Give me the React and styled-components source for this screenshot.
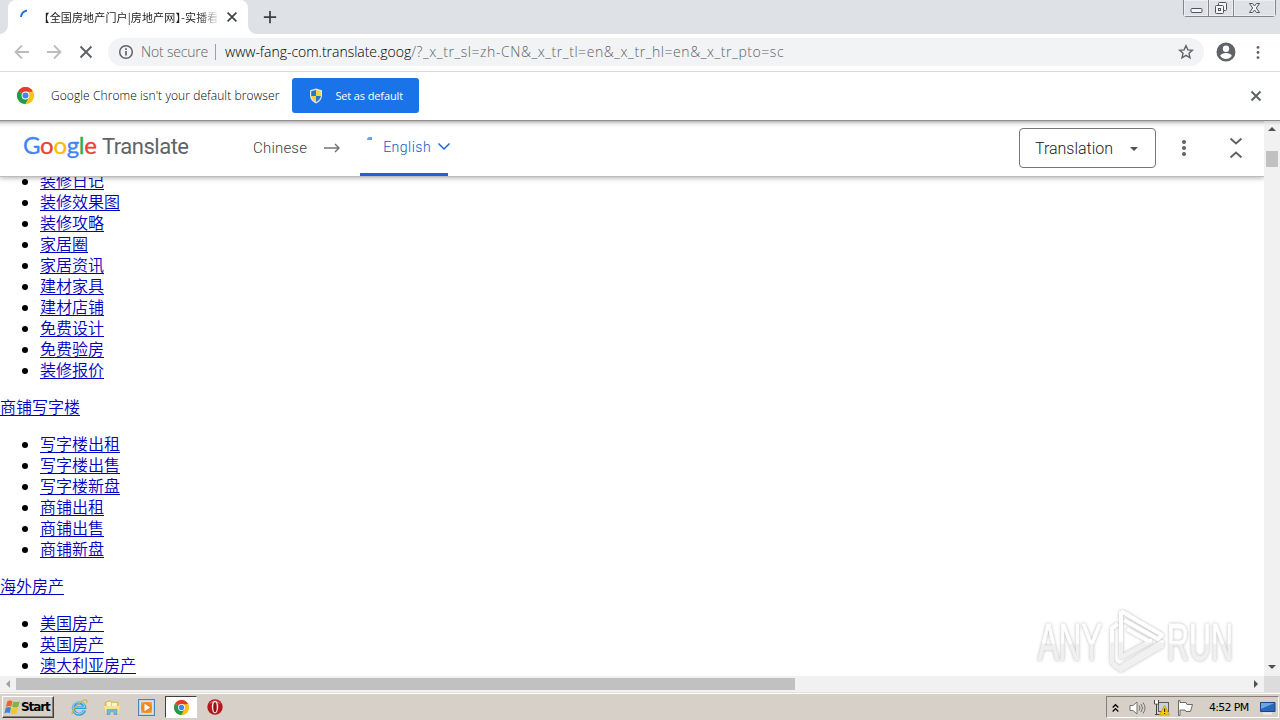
import React from 'react';
import styled, { createGlobalStyle } from 'styled-components';

const GlobalStyle = createGlobalStyle`
  * {
    box-sizing: border-box;
  }

  body {
    margin: 0;
    overflow: hidden;
    background: #fff;
  }

  svg {
    display: block;
    flex: none;
  }
`;

const Screen = styled.div`
  position: relative;
  width: 1280px;
  height: 720px;
  display: flex;
  flex-direction: column;
  overflow: hidden;
  font-family: 'Open Sans', 'Noto Sans CJK SC', sans-serif;
  color: #202124;
`;

const Label = styled.span`
  flex: none;
  white-space: nowrap;
  font-family: ${p => p.$font || 'inherit'};
  font-size: ${p => p.$size || 13}px;
  font-weight: ${p => p.$weight || 400};
  letter-spacing: ${p => p.$spacing || 0}px;
  margin-left: ${p => p.$left || 0}px;
  color: ${p => p.$color || 'inherit'};
  line-height: 20px;
`;

/* browser frame */

const TabStrip = styled.header`
  height: 34px;
  flex: none;
  display: flex;
  align-items: flex-start;
  padding-left: 8px;
  background: #dee1e6;
`;

const Tab = styled.div`
  position: relative;
  width: 240px;
  height: 34px;
  display: flex;
  align-items: center;
  padding: 0 9px 0 12px;
  background: #fff;
  border-radius: 8px 8px 0 0;

  &::before,
  &::after {
    content: '';
    position: absolute;
    bottom: 0;
    width: 8px;
    height: 8px;
  }

  &::before {
    left: -8px;
    background: radial-gradient(circle at 0 0, transparent 7.5px, #fff 8px);
  }

  &::after {
    right: -8px;
    background: radial-gradient(circle at 100% 0, transparent 7.5px, #fff 8px);
  }
`;

const TabTitle = styled.div`
  width: 173px;
  margin: 0 8px 0 8px;
  overflow: hidden;
  white-space: nowrap;
  font-family: 'Noto Sans CJK SC', sans-serif;
  font-size: 11px;
  line-height: 18px;
  letter-spacing: 0.15px;
  font-feature-settings: 'halt';
  color: #202124;
  mask-image: linear-gradient(90deg, #000 88%, transparent 102%);
`;

const NewTab = styled.div`
  padding: 10px 0 0 15px;
`;

const WindowButtons = styled.div`
  display: flex;
  width: 93px;
  height: 17px;
  margin: 0 4px 0 auto;
  border: 1px solid #82868c;
  border-top: 0;
  border-radius: 0 0 4px 4px;
`;

const WindowButton = styled.div`
  width: ${p => p.$width}px;
  display: flex;
  align-items: center;
  justify-content: center;
  box-shadow: inset 0 0 0 1px #eceef1;

  & + & {
    border-left: 1px solid #82868c;
  }
`;

const Toolbar = styled.div`
  height: 38px;
  flex: none;
  display: flex;
  align-items: center;
  padding: 0 13px 1px 14px;
  background: #fff;
  border-bottom: 1px solid #dadce0;
`;

const NavIcons = styled.div`
  display: flex;
  gap: 16px;
  margin-right: 14px;
`;

const AddressBar = styled.div`
  width: 1096px;
  height: 28px;
  display: flex;
  align-items: center;
  padding: 0 10px;
  background: #f1f3f4;
  border-radius: 14px;
`;

const Divider = styled.span`
  width: 1px;
  height: 16px;
  margin: 0 9px 0 7px;
  background: #9aa0a6;
`;

const BarEnd = styled.div`
  margin-left: auto;
`;

const ToolbarEnd = styled.div`
  display: flex;
  align-items: center;
  gap: 17px;
  margin-left: 10px;
`;

const InfoBar = styled.div`
  height: 48px;
  flex: none;
  display: flex;
  align-items: center;
  padding: 0 18px 1px 17px;
  background: #fff;
`;

const DefaultButton = styled.button`
  width: 127px;
  height: 35px;
  display: flex;
  align-items: center;
  gap: 11px;
  margin: 0 auto 0 13px;
  padding: 0 16px;
  border: 0;
  border-radius: 3px;
  background: #1a73e8;
  color: #fff;
  font-family: inherit;
`;

/* page viewport */

const Viewport = styled.main`
  height: 556px;
  flex: none;
  display: grid;
  grid-template-columns: 1264px 16px;
  border-top: 1px solid #8f8f8f;
  background: #fff;
`;

const Page = styled.div`
  height: 555px;
  overflow: hidden;
`;

const TranslateBar = styled.div`
  position: relative;
  z-index: 1;
  height: 56px;
  display: flex;
  align-items: center;
  padding: 0 18px 0 23px;
  background: linear-gradient(#b8b8b8, #ececec 3px, #fff 6px);
  border-bottom: 1px solid #bdbdbd;
  box-shadow: 0 1px 5px rgba(0, 0, 0, 0.32);
`;

const Wordmark = styled.div`
  display: flex;
  align-items: baseline;
  width: 230px;
  padding-bottom: 3px;
`;

const GoogleName = styled.span`
  width: 79px;
  -webkit-text-stroke: 0.35px;
`;

const SourceLanguage = styled.div`
  display: flex;
  align-items: center;
  gap: 17px;
  padding-bottom: 2px;
`;

const TargetLanguage = styled.div`
  position: relative;
  width: 88px;
  height: 55px;
  display: flex;
  align-items: center;
  gap: 6px;
  margin-left: 20px;
  padding: 0 0 1px 23px;
  border-bottom: 3px solid #1967d2;
  border-radius: 2px 2px 0 0;
`;

const LoadingMark = styled.span`
  position: absolute;
  left: 7px;
  top: 16px;
  width: 5px;
  height: 3px;
  border-radius: 3px 0 0 0;
  background: #6d9eeb;
`;

const ModeSelect = styled.div`
  width: 137px;
  height: 40px;
  display: flex;
  align-items: center;
  justify-content: space-between;
  margin: 0 25px 2px auto;
  padding: 2px 17px 0 15px;
  border: 1px solid #747775;
  border-radius: 4px;
`;

const BarActions = styled.div`
  display: flex;
  align-items: center;
  gap: 39px;
  padding-bottom: 2px;
`;

const Content = styled.div`
  margin-top: -6px;
  font-family: 'Liberation Serif', 'Noto Sans CJK SC', serif;
  font-size: 16px;
  line-height: 21px;
  color: #000;
`;

const LinkList = styled.ul`
  margin: 0 0 16px;
  padding-left: 22px;
  list-style: none;
`;

const ListItem = styled.li`
  height: 21px;
  display: flex;
  align-items: center;

  &::before {
    content: '';
    width: 6px;
    height: 6px;
    margin-right: 12px;
    border-radius: 50%;
    background: #000;
  }
`;

const SectionLink = styled.div`
  height: 21px;
  margin-bottom: 16px;
`;

const Link = styled.a`
  color: #0000c4;
  text-decoration: underline;
  text-decoration-thickness: 1px;
  text-underline-offset: 2px;
  font-weight: 350;
  cursor: pointer;
`;

const VerticalScroll = styled.div`
  display: flex;
  flex-direction: column;
  align-items: center;
  padding: 6px 0 7px;
  background: linear-gradient(#cfcfcf, #f1f1f1 4px);
`;

const VerticalThumb = styled.div`
  width: 12px;
  height: 16px;
  margin: 20px 0 auto 0;
  background: #c1c1c1;
`;

const HorizontalScroll = styled.div`
  height: 16px;
  flex: none;
  display: flex;
  align-items: center;
  background: #f1f1f1;
`;

const ScrollLeft = styled.div`
  width: 16px;
  padding-left: 6px;
`;

const ScrollRight = styled.div`
  margin-left: auto;
`;

const HorizontalThumb = styled.div`
  width: 779px;
  height: 12px;
  background: #c1c1c1;
`;

const ScrollCorner = styled.div`
  width: 16px;
  height: 16px;
  margin-left: 5px;
  background: #dcdcdc;
`;

/* taskbar */

const Taskbar = styled.footer`
  height: 28px;
  flex: none;
  display: flex;
  align-items: flex-start;
  padding: 3px 1px 0 2px;
  background: #d6d0c8;
  border-top: 1px solid #e4e0da;
  box-shadow: inset 0 1px 0 #fff;
`;

const StartButton = styled.div`
  width: 52px;
  height: 22px;
  display: flex;
  align-items: center;
  padding-left: 1px;
  border: 1px solid;
  border-color: #fff #404040 #404040 #fff;
  box-shadow: inset -1px -1px 0 #868078;
`;

const QuickLaunch = styled.div`
  display: flex;
  align-items: center;
  height: 22px;
  margin-left: 16px;
`;

const LaunchItem = styled.div`
  width: ${p => p.$width || 34}px;
  height: 22px;
  display: flex;
  align-items: center;
  justify-content: center;
  margin-left: ${p => (p.$active ? 9 : 0)}px;
  background: ${p => (p.$active ? '#fff' : 'transparent')};
  border: 1px solid;
  border-color: ${p => (p.$active ? '#404040 #fff #fff #404040' : 'transparent')};
`;

const Tray = styled.div`
  width: 173px;
  height: 22px;
  display: flex;
  align-items: center;
  margin-left: auto;
  padding: 1px 0 0 4px;
  border: 1px solid;
  border-color: #868078 #fff #fff #868078;
`;

const TraySlot = styled.div`
  width: ${p => p.$width}px;
  display: flex;
  align-items: center;
`;

const Watermark = styled.div`
  position: absolute;
  left: 1030px;
  top: 601px;
  z-index: 5;
  filter: drop-shadow(0 0 1.5px rgba(0, 0, 0, 0.28));
`;

const houseLinks = ['装修日记', '装修效果图', '装修攻略', '家居圈', '家居资讯', '建材家具', '建材店铺', '免费设计', '免费验房', '装修报价'];
const officeLinks = ['写字楼出租', '写字楼出售', '写字楼新盘', '商铺出租', '商铺出售', '商铺新盘'];
const overseasLinks = ['美国房产', '英国房产', '澳大利亚房产'];

const googleLetters = [
  ['G', '#4285f4'],
  ['o', '#ea4335'],
  ['o', '#fbbc05'],
  ['g', '#4285f4'],
  ['l', '#34a853'],
  ['e', '#ea4335'],
];

const StrokeIcon = ({ d, size = 16, color = '#5f6368', width = 2 }) => (
  <svg width={size} height={size} viewBox="0 0 16 16" fill="none" stroke={color} strokeWidth={width}>
    <path d={d} />
  </svg>
);

const Cross = ({ size = 16, color, width }) => (
  <StrokeIcon size={size} color={color} width={width} d="M3 3l10 10M13 3L3 13" />
);

const Dots = ({ height = 14, r = 1.5 }) => (
  <svg width="6" height={height} viewBox={`0 0 6 ${height}`} fill="#5f6368">
    <circle cx="3" cy={r} r={r} />
    <circle cx="3" cy={height / 2} r={r} />
    <circle cx="3" cy={height - r} r={r} />
  </svg>
);

const Arrow = ({ points, width = 8, height = 4, color = '#505050' }) => (
  <svg width={width} height={height} fill={color}>
    <polygon points={points} />
  </svg>
);

const ChromeIcon = ({ size = 17 }) => (
  <svg width={size} height={size} viewBox="0 0 24 24">
    <circle cx="12" cy="12" r="12" fill="#fbc116" />
    <path d="M12 12L1.6 6A12 12 0 0 1 22.4 6z" fill="#e33b2e" />
    <path d="M1.6 6A12 12 0 0 0 12 24l5.2-9L12 12z" fill="#229b4b" />
    <path d="M12 6.6h10.7A12 12 0 0 1 12 24l4.7-9.3z" fill="#fbc116" />
    <circle cx="12" cy="12" r="5.5" fill="#fff" />
    <circle cx="12" cy="12" r="4.3" fill="#4285f4" />
  </svg>
);

const ShieldIcon = () => (
  <svg width="16" height="16" viewBox="0 0 16 16">
    <path d="M8 .5l6 1.7v5.3c0 3.7-2.4 6.3-6 8-3.6-1.7-6-4.3-6-8V2.2z" fill="#dfe5ea" />
    <path d="M8 2v6H3.2V3.3z" fill="#2676c9" />
    <path d="M8 2v6h4.800V3.300z" fill="#f5d33b" />
    <path d="M8 8v6C5 12.4 3.3 10.500 3.2 8z" fill="#f5d33b" />
    <path d="M8 8v6c3-1.6 4.7-3.5 4.8-6z" fill="#2676c9" />
  </svg>
);

const InternetExplorerIcon = () => (
  <svg width="18" height="18" viewBox="0 0 18 18" fill="none">
    <path d="M14.5 12.3A5.700 5.700 0 1 1 14.7 9.500H4" stroke="#3a9bd4" strokeWidth="3.2" />
    <path d="M14.3 12.3A6 6 0 1 1 14.800 9.200H5" stroke="#8ad6f5" strokeWidth="1.2" />
    <path d="M2.5 16C-.5 13.500 12 .5 16.5 2c1 .5.5 2-.3 3.2" stroke="#d6b43c" strokeWidth="1.2" />
  </svg>
);

const FolderIcon = () => (
  <svg width="18" height="17" viewBox="0 0 18 17">
    <path d="M2 3.5l5-2 1 1.500 7 .5v10H2z" fill="#e9cf6c" stroke="#cdae50" strokeWidth=".7" />
    <path d="M4 3h4v5H4zM9 4h5v4H9z" fill="#f8f3cf" />
    <path d="M1 7h16l-1 7H2z" fill="#f4e49b" />
    <path d="M4 15.500v-5h10v5h-3v-2.500H7v2.500z" fill="#75b9df" stroke="#4e97c4" strokeWidth=".6" />
  </svg>
);

const PlayerIcon = () => (
  <svg width="17" height="17" viewBox="0 0 17 17">
    <rect x=".5" y=".5" width="16" height="16" fill="#b9d6ef" stroke="#4f83b8" />
    <rect x="2.5" y="2.5" width="12" height="12" fill="#f3a54c" stroke="#d5e6f5" />
    <circle cx="8.5" cy="8.5" r="5.6" fill="#f08a1c" />
    <path d="M6.5 4.700v7.600l5.500-3.800z" fill="#fff" />
  </svg>
);

const OperaIcon = () => (
  <svg width="16" height="16" viewBox="0 0 16 16">
    <circle cx="8" cy="8" r="7.7" fill="#b5151b" />
    <path d="M2 5.500a6.500 6.500 0 0 1 12 0C12 3 4 3 2 5.500z" fill="#e0585a" />
    <ellipse cx="8" cy="8" rx="3.2" ry="6.3" fill="#f7eae8" />
    <ellipse cx="8" cy="8.2" rx="1.7" ry="5" fill="#8e1115" />
  </svg>
);

const WindowsFlag = () => (
  <svg width="17" height="17" viewBox="0 0 16 16">
    <path d="M3 2.5C5 1 6.500 1.300 8 2L6.800 7.200C5.300 6.500 3.700 6.400 1.800 7.600z" fill="#e8662c" />
    <path d="M8.800 2.300c2 .9 4 .8 6-.3l-1.300 5.200c-2 1-4 1-5.900.2z" fill="#7fb643" />
    <path d="M1.600 8.400c1.900-1.200 3.500-1.100 5-.4l-1.200 5.300C4 12.600 2.300 12.600.4 13.700z" fill="#3d86cf" />
    <path d="M7.400 8.300c2 .8 3.900.8 5.900-.2l-1.300 5.300c-2 1-3.900.9-5.900 0z" fill="#f5c52e" />
  </svg>
);

const SpeakerIcon = () => (
  <svg width="17" height="16" viewBox="0 0 17 16" fill="none" stroke="#77736e">
    <path d="M1 5.5h3L8 2v12l-4-3.500H1z" fill="#fff" />
    <path d="M10 5.500q2 2.500 0 5M12 4q3 4 0 8M14 2.500q4 5.500 0 11" />
  </svg>
);

const NetworkIcon = () => (
  <svg width="17" height="17" viewBox="0 0 17 17">
    <rect x="5.5" y="3.5" width="10" height="9" fill="#c9d0d4" stroke="#5c5c5c" />
    <path d="M1.5 1v4h4V1M3.5 5v10M2 15.500h6" fill="none" stroke="#444" />
    <path d="M2 1.500h3v3H2z" fill="#fff" />
    <path d="M11.5 6.500l5 9.500h-10z" fill="#f6c91b" stroke="#c79b0b" strokeWidth=".8" />
    <path d="M11 9.500h1.200v3.500H11zM11 14h1.200v1H11z" fill="#3c2f00" />
  </svg>
);

const FlagIcon = () => (
  <svg width="17" height="16" viewBox="0 0 17 16" fill="#fff" stroke="#6f6b66">
    <path d="M1.5.5v15H3V10h5l1 1.500h4.500l2-7H10L9 2.500H3v-2z" />
  </svg>
);

const MonitorIcon = () => (
  <svg width="16" height="14" viewBox="0 0 16 14">
    <path d="M.5 1.500h14.500v9H.5z" fill="#2869be" stroke="#174681" />
    <path d="M1 2h13.500L1 8z" fill="#6aa7e6" />
    <path d="M3 12.500h9" stroke="#e8eef4" strokeWidth="2" />
  </svg>
);

const AnyRunLogo = () => (
  <svg width="210" height="76" viewBox="0 0 210 76">
    <defs>
      <linearGradient id="markFill" x1="0" y1="0" x2="0" y2="1">
        <stop offset=".52" stopColor="#fff" />
        <stop offset=".54" stopColor="#f0f0f0" />
      </linearGradient>
      <linearGradient id="markStroke" gradientUnits="userSpaceOnUse" x1="0" y1="10" x2="0" y2="70">
        <stop offset=".5" stopColor="#fff" />
        <stop offset=".54" stopColor="#f0f0f0" />
      </linearGradient>
    </defs>
    <g
      fill="url(#markFill)"
      stroke="url(#markFill)"
      strokeWidth="1"
      fontFamily="'Liberation Sans', sans-serif"
      fontSize="52"
    >
      <text x="8" y="59" textLength="64" lengthAdjust="spacingAndGlyphs">ANY</text>
      <text x="137" y="59" textLength="66" lengthAdjust="spacingAndGlyphs">RUN</text>
    </g>
    <g fill="none" stroke="url(#markStroke)" strokeWidth="4" strokeLinejoin="round">
      <path d="M82 63V27l6-4" />
      <path d="M91 10v46l31-17M91 10l41 24-4 4-34-19" />
      <path d="M82 62l7 5 43-26v4L91 69l-7-5" />
      <path d="M97 28l23 13-29 16" />
    </g>
  </svg>
);

const LinkItems = ({ items }) => (
  <LinkList>
    {items.map(item => (
      <ListItem key={item}>
        <Link>{item}</Link>
      </ListItem>
    ))}
  </LinkList>
);

const App = () => {
  return (
    <Screen>
      <GlobalStyle />
      <TabStrip>
        <Tab>
          <svg width="16" height="16" viewBox="0 0 16 16" fill="none" stroke="#1a73e8" strokeWidth="2">
            <path d="M1 8Q1.500 2.500 7 1.500" />
          </svg>
          <TabTitle>【全国房地产门户|房地产网】-实播看</TabTitle>
          <Cross size={14} color="#3c4043" width={1.9} />
        </Tab>
        <NewTab>
          <StrokeIcon size={14} color="#3c4043" d="M8 1v14M1 8h14" />
        </NewTab>
        <WindowButtons>
          <WindowButton $width={24}>
            <svg width="13" height="16" fill="#f5f5f5" stroke="#4f5560">
              <rect x="1" y="8.5" width="11" height="4" rx="1" />
            </svg>
          </WindowButton>
          <WindowButton $width={25}>
            <svg width="14" height="14" fill="#f5f5f5" stroke="#4f5560">
              <rect x="4.5" y="1.5" width="8" height="8" rx="1" />
              <rect x="1.5" y="4.5" width="8" height="8" rx="1" />
              <rect x="4.5" y="7.5" width="2" height="2" />
            </svg>
          </WindowButton>
          <WindowButton $width={42}>
            <svg width="13" height="12" viewBox="0 0 13 12" fill="#f5f5f5" stroke="#4f5560">
              <path d="M1.5 1.500h3l2 2.500 2-2.500h3L8.300 6l3.200 4.500h-3l-2-2.500-2 2.500h-3L4.700 6z" />
            </svg>
          </WindowButton>
        </WindowButtons>
      </TabStrip>

      <Toolbar>
        <NavIcons>
          <StrokeIcon color="#babcbe" d="M15 8H2M8 1.500L1.500 8 8 14.500" width={1.8} />
          <StrokeIcon color="#babcbe" d="M1 8h13M8 1.500L14.500 8 8 14.500" width={1.8} />
          <StrokeIcon d="M2.500 2.500l11 11M13.500 2.500l-11 11" />
        </NavIcons>
        <AddressBar>
          <svg width="16" height="16" viewBox="0 0 16 16" fill="none" stroke="#5f6368" strokeWidth="1.5">
            <circle cx="8" cy="8" r="6.3" />
            <path d="M8 7v4.500M8 4.300v1.600" strokeWidth="1.7" />
          </svg>
          <Label $size={14} $weight={300} $color="#5f6368" $left={7} $spacing={-0.18}>Not secure</Label>
          <Divider />
          <Label $size={14} $weight={300} $color="#000" $spacing={-0.02}>www-fang-com.translate.goog</Label>
          <Label $size={14} $weight={300} $color="#5f6368" $spacing={0.56}>/?_x_tr_sl=zh-CN&_x_tr_tl=en&_x_tr_hl=en&_x_tr_pto=sc</Label>
          <BarEnd>
            <svg width="16" height="16" viewBox="0 0 16 16" fill="none" stroke="#5f6368" strokeWidth="1.4">
              <path d="M8 1.700l1.900 4.200 4.500.4-3.400 3 1 4.500L8 11.400l-4 2.400 1-4.500-3.400-3 4.500-.4z" />
            </svg>
          </BarEnd>
        </AddressBar>
        <ToolbarEnd>
          <svg width="24" height="24" viewBox="0 0 24 24" fill="#5f6368">
            <path d="M12 2.500a9.500 9.500 0 1 0 0 19 9.500 9.500 0 0 0 0-19zm0 3a3.200 3.200 0 1 1 0 6.400 3.200 3.200 0 0 1 0-6.400zm0 13.400a6.800 6.800 0 0 1-5.700-3c0-2 3.800-3 5.700-3s5.700 1 5.700 3a6.800 6.800 0 0 1-5.700 3z" />
          </svg>
          <Dots height={13} r={1.4} />
        </ToolbarEnd>
      </Toolbar>

      <InfoBar>
        <ChromeIcon />
        <Label $size={12} $weight={300} $left={17} $spacing={0.08} $color="#000">Google Chrome isn't your default browser</Label>
        <DefaultButton>
          <ShieldIcon />
          <Label $size={11} $spacing={-0.13}>Set as default</Label>
        </DefaultButton>
        <StrokeIcon size={12} width={2.6} d="M2 2l12 12M14 2L2 14" />
      </InfoBar>

      <Viewport>
        <Page>
          <TranslateBar>
            <Wordmark>
              <GoogleName>
                {googleLetters.map(([letter, color], i) => (
                  <Label key={i} $font="Lato, sans-serif" $size={24} $spacing={-0.3} $color={color}>{letter}</Label>
                ))}
              </GoogleName>
              <Label $font="Roboto, sans-serif" $size={22} $spacing={-0.5} $color="#5f6368">Translate</Label>
            </Wordmark>
            <SourceLanguage>
              <Label $font="Roboto, sans-serif" $size={15} $weight={300} $spacing={0.2} $color="#3c4043">Chinese</Label>
              <svg width="16" height="10" fill="none" stroke="#757575" strokeWidth="1.5">
                <path d="M0 5h15M11 1l4 4-4 4" />
              </svg>
            </SourceLanguage>
            <TargetLanguage>
              <LoadingMark />
              <Label $font="Roboto, sans-serif" $size={14} $weight={300} $spacing={0.5} $color="#0b57c4">English</Label>
              <svg width="14" height="9" fill="none" stroke="#1967d2" strokeWidth="1.5">
                <path d="M1.5 1.500L7 7l5.500-5.500" />
              </svg>
            </TargetLanguage>
            <ModeSelect>
              <Label $font="Roboto, sans-serif" $size={16} $weight={300} $spacing={-0.02}>Translation</Label>
              <Arrow points="0,0 8,0 4,4" />
            </ModeSelect>
            <BarActions>
              <Dots height={16} r={2} />
              <svg width="20" height="24" viewBox="0 0 20 24" fill="none" stroke="#5f6368" strokeWidth="2">
                <path d="M4.5 2.500l5.500 5 5.500-5M4.500 21.500l5.500-5 5.500 5" />
              </svg>
            </BarActions>
          </TranslateBar>
          <Content>
            <LinkItems items={houseLinks} />
            <SectionLink>
              <Link>商铺写字楼</Link>
            </SectionLink>
            <LinkItems items={officeLinks} />
            <SectionLink>
              <Link>海外房产</Link>
            </SectionLink>
            <LinkItems items={overseasLinks} />
          </Content>
        </Page>
        <VerticalScroll>
          <Arrow points="0,4 4,0 8,4" />
          <VerticalThumb />
          <Arrow points="0,0 8,0 4,4" />
        </VerticalScroll>
      </Viewport>
      <HorizontalScroll>
        <ScrollLeft>
          <Arrow width={4} height={8} points="4,0 0,4 4,8" color="#a3a3a3" />
        </ScrollLeft>
        <HorizontalThumb />
        <ScrollRight>
          <Arrow width={5} height={8} points="0,0 4,4 0,8" />
        </ScrollRight>
        <ScrollCorner />
      </HorizontalScroll>

      <Taskbar>
        <StartButton>
          <WindowsFlag />
          <Label $font="'DejaVu Sans', sans-serif" $size={12} $weight={700} $color="#000" $spacing={-1.1}>Start</Label>
        </StartButton>
        <QuickLaunch>
          <LaunchItem $width={17}><InternetExplorerIcon /></LaunchItem>
          <LaunchItem $width={50}><FolderIcon /></LaunchItem>
          <LaunchItem $width={19}><PlayerIcon /></LaunchItem>
          <LaunchItem $width={32} $active><ChromeIcon size={15} /></LaunchItem>
          <LaunchItem $width={36}><OperaIcon /></LaunchItem>
        </QuickLaunch>
        <Tray>
          <TraySlot $width={18}>
            <StrokeIcon size={9} color="#000" width={2.2} d="M3 8l5-5 5 5M3 15l5-5 5 5" />
          </TraySlot>
          <TraySlot $width={24}><SpeakerIcon /></TraySlot>
          <TraySlot $width={24}><NetworkIcon /></TraySlot>
          <TraySlot $width={32}><FlagIcon /></TraySlot>
          <TraySlot $width={51}>
            <Label $font="'DejaVu Sans', sans-serif" $size={11} $color="#000" $spacing={-0.7}>4:52 PM</Label>
          </TraySlot>
          <MonitorIcon />
        </Tray>
      </Taskbar>

      <Watermark>
        <AnyRunLogo />
      </Watermark>
    </Screen>
  );
};

export default App;
